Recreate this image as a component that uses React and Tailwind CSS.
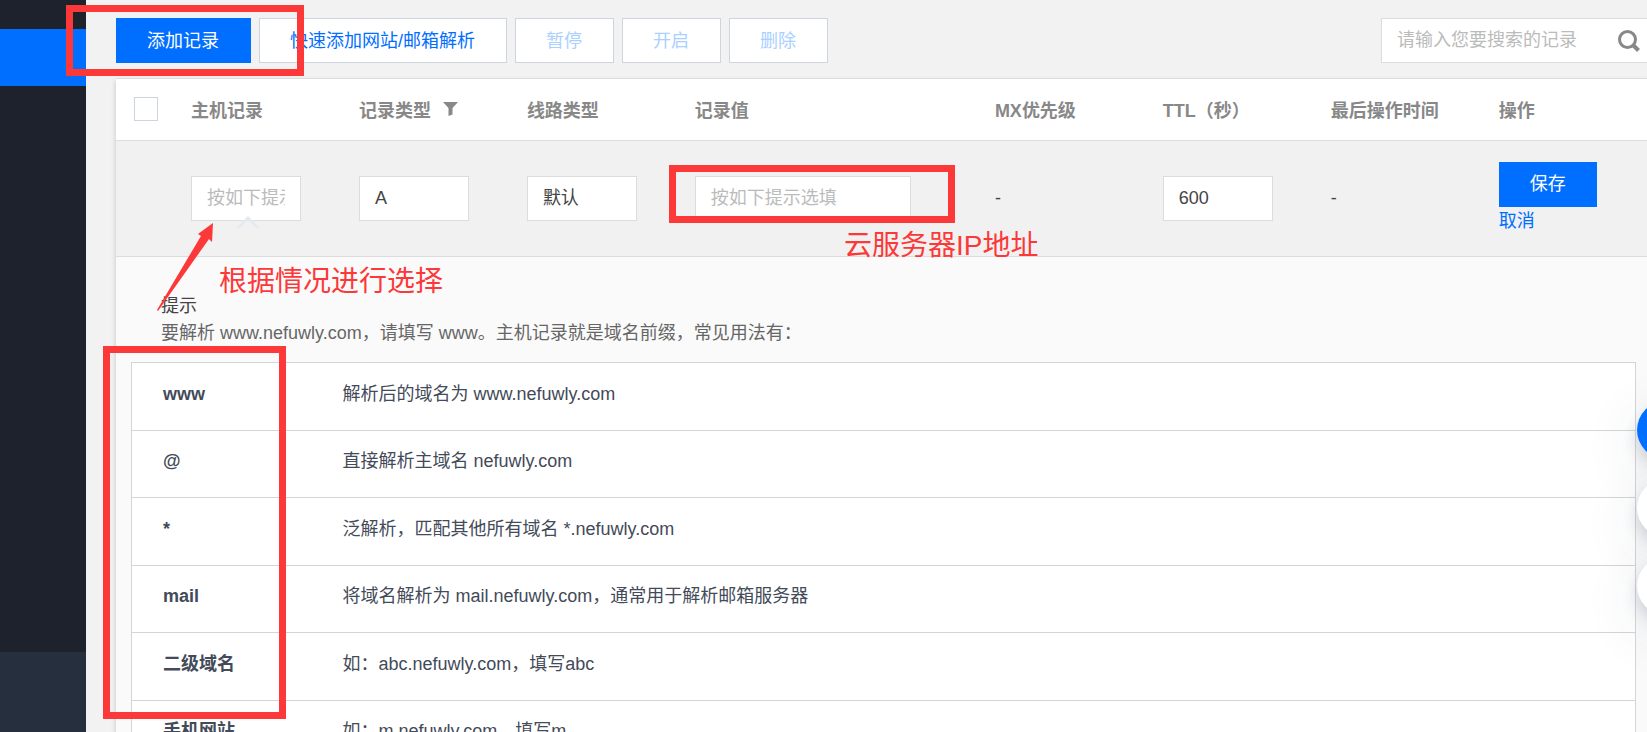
import React from 'react';

const hints = [
  ['www', '解析后的域名为 www.nefuwly.com'],
  ['@', '直接解析主域名 nefuwly.com'],
  ['*', '泛解析，匹配其他所有域名 *.nefuwly.com'],
  ['mail', '将域名解析为 mail.nefuwly.com，通常用于解析邮箱服务器'],
  ['二级域名', '如：abc.nefuwly.com，填写abc'],
  ['手机网站', '如：m.nefuwly.com，填写m'],
];

const fieldBase =
  'block h-[45px] appearance-none rounded-none border border-[#dcdcdc] bg-white px-[15px] text-lg text-[#444] outline-none placeholder:text-[#bbb]';

function Sidebar() {
  return (
    <nav aria-label="主导航" className="flex w-[86px] shrink-0 flex-col bg-[#1e222d]">
      <a href="#records" aria-label="域名解析" className="mt-[29px] block h-[57px] bg-[#006eff]" />
      <div className="mt-auto h-20 bg-[#262f3e]" />
    </nav>
  );
}

function ToolButton({ children, primary, disabled }) {
  const tone = primary
    ? 'border-[#006eff] bg-[#006eff] text-white'
    : disabled
      ? 'border-[#cfd5de] bg-white text-[#aad0ff]'
      : 'border-[#cfd5de] bg-white text-[#006eff]';
  return (
    <button type="button" disabled={disabled} className={`h-[45px] shrink-0 border pr-[31px] pl-[30px] text-lg ${tone}`}>
      {children}
    </button>
  );
}

function Toolbar() {
  return (
    <div className="flex gap-2 pt-[18px] pb-[15px]">
      <ToolButton primary>添加记录</ToolButton>
      <ToolButton>快速添加网站/邮箱解析</ToolButton>
      <ToolButton disabled>暂停</ToolButton>
      <ToolButton disabled>开启</ToolButton>
      <ToolButton disabled>删除</ToolButton>
      <div className="ml-auto flex h-[45px] w-[266px] items-center border border-r-0 border-[#dcdcdc] bg-white pr-[7px] pl-[15px]">
        <input
          type="search"
          aria-label="搜索记录"
          placeholder="请输入您要搜索的记录"
          className="h-full min-w-0 flex-1 text-lg text-[#444] outline-none placeholder:text-[#bbb]"
        />
        <button type="button" aria-label="搜索">
          <svg width="22" height="22" viewBox="0 0 22 22" fill="none" stroke="#888" strokeWidth="3">
            <circle cx="9.5" cy="9.5" r="8" />
            <path d="M15 15l5.5 5.5" strokeWidth="4" />
          </svg>
        </button>
      </div>
    </div>
  );
}

function RecordTable() {
  return (
    <table className="w-full table-fixed text-left text-lg">
      <colgroup>
        <col className="w-[75px]" />
        <col className="w-[10.97%]" />
        <col className="w-[10.97%]" />
        <col className="w-[10.97%]" />
        <col className="w-[19.6%]" />
        <col className="w-[10.97%]" />
        <col className="w-[10.97%]" />
        <col className="w-[10.97%]" />
        <col />
      </colgroup>
      <thead>
        <tr className="h-[61px] border-b border-[#ddd] bg-white text-[#888] [&>th+th]:pt-[3px]">
          <th className="pl-[18px]">
            <input
              type="checkbox"
              aria-label="全选"
              className="block size-6 appearance-none border border-[#cfd5de] bg-white"
            />
          </th>
          <th>主机记录</th>
          <th>
            <span className="flex items-center gap-3">
              记录类型
              <button type="button" aria-label="筛选" className="pb-1">
                <svg width="15" height="14" viewBox="0 0 15 14" fill="#888">
                  <path d="M0 0h15L9.5 6v6.5L5.5 14V6z" />
                </svg>
              </button>
            </span>
          </th>
          <th>线路类型</th>
          <th>记录值</th>
          <th>MX优先级</th>
          <th>TTL（秒）</th>
          <th>最后操作时间</th>
          <th>操作</th>
        </tr>
      </thead>
      <tbody>
        <tr className="h-[116px] border-b border-[#ddd] bg-[#f1f1f1] text-[#444]">
          <td />
          <td>
            <div className="relative w-[110px]">
              <input aria-label="主机记录" placeholder="按如下提示选填" className={`${fieldBase} w-full`} />
              <svg className="absolute top-10 left-[45px]" width="24" height="12" viewBox="0 0 24 12" fill="none">
                <path d="M1 13L12 2l11 11" stroke="#e5eaf2" strokeWidth="3" />
              </svg>
            </div>
          </td>
          <td>
            <select aria-label="记录类型" className={`${fieldBase} w-[110px]`}>
              <option>A</option>
            </select>
          </td>
          <td>
            <select aria-label="线路类型" className={`${fieldBase} w-[110px]`}>
              <option>默认</option>
            </select>
          </td>
          <td>
            <input aria-label="记录值" placeholder="按如下提示选填" className={`${fieldBase} w-[216px]`} />
          </td>
          <td>-</td>
          <td>
            <input aria-label="TTL（秒）" defaultValue="600" className={`${fieldBase} w-[110px]`} />
          </td>
          <td>-</td>
          <td>
            <button type="button" className="block h-[45px] bg-[#006eff] px-[31px] text-white">
              保存
            </button>
            <a href="#cancel" className="block text-[#006eff]">
              取消
            </a>
          </td>
        </tr>
      </tbody>
    </table>
  );
}

function HintPanel() {
  return (
    <section className="bg-[#fafafa] pt-9 pr-[11px] pl-[15px] text-lg/[27px]">
      <h3 className="pl-[30px] text-[#444]">提示</h3>
      <p className="pl-[30px] text-[#666]">
        要解析 www.nefuwly.com，请填写 www。主机记录就是域名前缀，常见用法有：
      </p>
      <table className="mt-[15px] w-full table-fixed border-collapse border border-[#d4d5d9] bg-white text-left text-[#434a59]">
        <colgroup>
          <col className="w-[180px]" />
          <col />
        </colgroup>
        <tbody>
          {hints.map(([host, description]) => (
            <tr key={host} className="border-b border-[#d4d5d9] odd:h-[68px] even:h-[67px]">
              <th scope="row" className="pb-1 pl-[31px]">{host}</th>
              <td className="pb-1 pl-[31px]">{description}</td>
            </tr>
          ))}
        </tbody>
      </table>
    </section>
  );
}

function FloatingActions() {
  const shape = 'size-[58px] rounded-full shadow-[0_8px_14px_rgba(40,60,90,0.18),0_16px_60px_rgba(40,60,90,0.12)]';
  return (
    <div className="absolute top-[401px] -right-12 flex flex-col gap-5">
      <button type="button" aria-label="在线咨询" className={`${shape} bg-[#006eff]`} />
      <button type="button" aria-label="联系电话" className={`${shape} bg-white`} />
      <button type="button" aria-label="意见反馈" className={`${shape} bg-white`} />
    </div>
  );
}

function Annotations() {
  return (
    <div className="pointer-events-none absolute inset-0 text-[28px]/[36px] text-[#fc3838]">
      <div className="absolute top-[5px] left-[66px] h-[71px] w-[238px] border-7 border-[#fc3838]" />
      <div className="absolute top-[165px] left-[669px] h-[58px] w-[286px] border-7 border-[#fc3838]" />
      <div className="absolute top-[346px] left-[103px] h-[373px] w-[183px] border-7 border-[#fc3838]" />
      <svg className="absolute top-[222px] left-[156px]" width="60" height="92" viewBox="0 0 60 92" fill="#fc3838">
        <path d="M57 1L42 12l3 2L1 88l1 1L53 17l3 3z" />
      </svg>
      <p className="absolute top-[264px] left-[219px]">根据情况进行选择</p>
      <p className="absolute top-[228px] left-[844px]">云服务器IP地址</p>
    </div>
  );
}

export default function App() {
  return (
    <div className="relative flex h-screen overflow-hidden bg-[#f2f2f2] font-['Liberation_Sans','Noto_Sans_CJK_SC',sans-serif]">
      <Sidebar />
      <main className="flex min-w-0 flex-1 flex-col pl-[30px]">
        <Toolbar />
        <div className="flex-1 border-t border-[#ddd] bg-[#fafafa] shadow-[0_3px_5px_rgba(0,0,0,0.2)]">
          <RecordTable />
          <HintPanel />
        </div>
      </main>
      <FloatingActions />
      <Annotations />
    </div>
  );
}
